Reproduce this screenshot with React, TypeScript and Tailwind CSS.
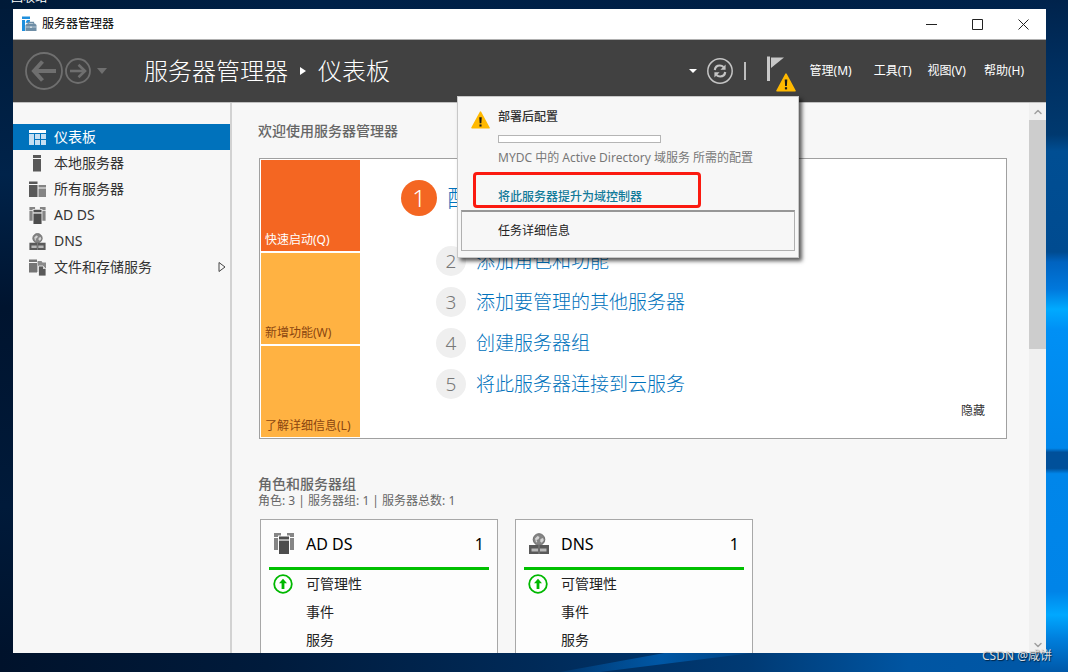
import { ReactNode } from "react";
import { ChevronDown, ChevronUp } from "lucide-react";

interface IconProps {
  className?: string;
}

function Wallpaper() {
  return (
    <svg
      className="absolute inset-0 h-full w-full"
      viewBox="0 0 1068 672"
      preserveAspectRatio="none"
      aria-hidden="true"
    >
      <defs>
        <linearGradient id="base" x1="0" x2="1" y1="0" y2="0">
          <stop offset="0" stopColor="#001a38" />
          <stop offset="0.3" stopColor="#002148" />
          <stop offset="0.7" stopColor="#001f45" />
          <stop offset="1" stopColor="#00234c" />
        </linearGradient>
        <linearGradient id="left" x1="0" x2="0" y1="0" y2="1">
          <stop offset="0" stopColor="#001b3a" />
          <stop offset="0.25" stopColor="#00234a" />
          <stop offset="0.45" stopColor="#00142f" />
          <stop offset="0.75" stopColor="#001a3a" />
          <stop offset="1" stopColor="#00122b" />
        </linearGradient>
        <linearGradient id="right" x1="0" x2="0" y1="0" y2="1">
          <stop offset="0" stopColor="#00234c" />
          <stop offset="0.1" stopColor="#002f60" />
          <stop offset="0.2" stopColor="#00396f" />
          <stop offset="0.225" stopColor="#004e93" />
          <stop offset="0.375" stopColor="#004b90" />
          <stop offset="0.39" stopColor="#0063c0" />
          <stop offset="0.43" stopColor="#0078dc" />
          <stop offset="0.46" stopColor="#00aaff" />
          <stop offset="0.49" stopColor="#0090f5" />
          <stop offset="0.667" stopColor="#0086ea" />
          <stop offset="0.673" stopColor="#00509a" />
          <stop offset="0.697" stopColor="#00509a" />
          <stop offset="0.705" stopColor="#0086ea" />
          <stop offset="0.88" stopColor="#0084e8" />
          <stop offset="0.915" stopColor="#00a8ff" />
          <stop offset="0.95" stopColor="#007fdd" />
          <stop offset="1" stopColor="#0058a8" />
        </linearGradient>
        <linearGradient id="bottom" x1="0" x2="1" y1="0" y2="0">
          <stop offset="0" stopColor="#00122b" />
          <stop offset="0.25" stopColor="#001b3c" />
          <stop offset="0.5" stopColor="#002a58" />
          <stop offset="0.7" stopColor="#003a74" />
          <stop offset="0.85" stopColor="#0055a2" />
          <stop offset="1" stopColor="#0058a8" />
        </linearGradient>
        <linearGradient id="beam" x1="0" x2="1" y1="0" y2="0">
          <stop offset="0" stopColor="#0060b4" stopOpacity="0.2" />
          <stop offset="0.5" stopColor="#0060b4" stopOpacity="0.8" />
          <stop offset="1" stopColor="#0060b4" stopOpacity="0.2" />
        </linearGradient>
      </defs>
      <rect width="1068" height="672" fill="url(#base)" />
      <rect y="9" width="14" height="663" fill="url(#left)" />
      <rect y="650" width="1068" height="22" fill="url(#bottom)" />
      <path d="M560 672 L670 652 L760 652 L600 672 Z" fill="url(#beam)" />
      <rect x="1040" width="28" height="672" fill="url(#right)" />
    </svg>
  );
}

function AppIcon({ className }: IconProps) {
  return (
    <svg className={className} viewBox="0 0 16 16" aria-hidden="true">
      <path d="M1 0.500h8V3H1zM1 4h3v11H1z" fill="#1f8fdd" />
      <path d="M4.500 6.500 6 4h3v1.500L6.500 7z" fill="#1f8fdd" />
      <path d="M4.500 9 6 7.500h8L15.500 9v6h-11z" fill="#6f8ea6" />
      <path d="M7.500 7.800V6.300h5v1.500" fill="none" stroke="#6f8ea6" strokeWidth="1.200" />
      <path d="M4.500 11h11" stroke="#c9d6df" strokeWidth="0.800" />
      <path d="M9.200 10.400h1.600V12H9.200z" fill="#dfe7ec" />
    </svg>
  );
}

function DashboardIcon({ className }: IconProps) {
  return (
    <svg className={className} viewBox="0 0 17 17" aria-hidden="true">
      <path d="M0 1h17v3H0z" fill="#fff" />
      <path d="M0 5h5v11H0zM6 5h5v5H6zM12 5h5v5h-5zM6 11h5v5H6zM12 11h5v5h-5z" fill="#c5def2" />
    </svg>
  );
}

function ServerIcon({ className }: IconProps) {
  return (
    <svg className={className} viewBox="0 0 17 17" aria-hidden="true">
      <path d="M4 0h8v3H4zM4 4h8v12.500H4z" fill="#595959" />
    </svg>
  );
}

function ServersIcon({ className }: IconProps) {
  return (
    <svg className={className} viewBox="0 0 17 17" aria-hidden="true">
      <path d="M0 0.500h8.500V3H0zM0 4h8.500v12H0z" fill="#595959" />
      <path d="M9.500 4H17v2.500H9.500zM9.500 7.500H17V16H9.500z" fill="#858585" />
    </svg>
  );
}

function AdDsIcon({ className }: IconProps) {
  return (
    <svg className={className} viewBox="0 0 20 21" aria-hidden="true">
      <path d="M0 0h7v2.500H4V4H0zM13 0h7v4h-4V2.500h-3zM0 5h4v12H0zM16 5h4v12h-4z" fill="#858585" />
      <path d="M5 3.500h10v3H5zM5 8h10v13H5z" fill="#4d4d4d" />
      <path d="M5 6.500h10V8H5z" fill="#b5b5b5" />
    </svg>
  );
}

function DnsIcon({ className }: IconProps) {
  return (
    <svg className={className} viewBox="0 0 20 21" aria-hidden="true">
      <circle cx="10" cy="6.500" r="5.800" fill="#858585" stroke="#6b6b6b" />
      <path d="M6 5.500 8.500 3l2 1-1 2.200-2 .8.800 2-1.300.4zM11.500 6l2.500-1 .8 2.300-2 2.400-1.600-1.300z" fill="#d4d4d4" />
      <path d="M0 12h20v9H0z" fill="#595959" />
      <path d="M2.500 15.500H9v3H2.500zM11 15.500h6.500v3H11z" fill="#b8b8b8" />
      <path d="M9.600 12h.8v9h-.8z" fill="#8a8a8a" />
    </svg>
  );
}

function StorageIcon({ className }: IconProps) {
  return (
    <svg className={className} viewBox="0 0 17 17" aria-hidden="true">
      <path d="M0 0.500h8V3H0zM0 4h8v9.500H0z" fill="#757575" />
      <path d="M8.500 2h4l1 1.500H17V13H8.500z" fill="#8a8a8a" />
      <path d="M9.500 7h4.500l3 3v7H9.500z" fill="#595959" stroke="#f7f7f7" strokeWidth="0.800" />
      <path d="M14 7v3h3z" fill="#d0d0d0" />
    </svg>
  );
}

function WarningIcon({ className }: IconProps) {
  return (
    <svg className={className} viewBox="0 0 20 19" aria-hidden="true">
      <path
        d="M10 1.200 19 17.800H1z"
        fill="#ffb900"
        stroke="#ffb900"
        strokeWidth="1.600"
        strokeLinejoin="round"
      />
      <path d="M8.700 6.500h2.600l-.4 6.500H9.100z" fill="#1a1a1a" />
      <path d="M8.900 14.200h2.200v2.200H8.900z" fill="#1a1a1a" />
    </svg>
  );
}

function StatusUpIcon({ className }: IconProps) {
  return (
    <svg className={className} viewBox="0 0 20 20" aria-hidden="true">
      <circle cx="10" cy="10" r="8.800" fill="#fff" stroke="#00b800" strokeWidth="1.800" />
      <path d="M10 4.800 14 9.300h-2.600V15H8.600V9.300H6z" fill="#00b800" />
    </svg>
  );
}

function BackIcon() {
  return (
    <svg className="h-[38px] w-[38px]" viewBox="0 0 38 38" fill="none" stroke="#6f6f6f" aria-hidden="true">
      <circle cx="19" cy="19" r="18" strokeWidth="1.800" />
      <path d="M31 19H9.500" strokeWidth="4" />
      <path d="M17.500 9.500 9 19l8.500 9.500" strokeWidth="4" />
    </svg>
  );
}

function ForwardIcon() {
  return (
    <svg className="h-[26px] w-[26px]" viewBox="0 0 26 26" fill="none" stroke="#6f6f6f" aria-hidden="true">
      <circle cx="13" cy="13" r="12" strokeWidth="1.800" />
      <path d="M5 13h14.500" strokeWidth="2.600" />
      <path d="M13.500 6.800 20 13l-6.500 6.200" strokeWidth="2.600" />
    </svg>
  );
}

function RefreshIcon() {
  return (
    <svg className="h-[26px] w-[26px]" viewBox="0 0 26 26" fill="none" stroke="#c4c4c4" aria-hidden="true">
      <circle cx="13" cy="13" r="12.200" strokeWidth="1.500" />
      <path d="M7.800 12c.4-3 2.400-4.500 5-4.500 1.600 0 2.700.5 3.700 1.500" strokeWidth="2.200" />
      <path d="M18.200 14c-.4 3-2.400 4.500-5 4.500-1.600 0-2.700-.5-3.700-1.500" strokeWidth="2.200" />
      <path d="M18.600 6.500v5.200h-5.200zM7.400 19.500v-5.200h5.200z" fill="#c4c4c4" stroke="none" />
    </svg>
  );
}

function FlagIcon() {
  return (
    <svg className="h-[36px] w-[30px]" viewBox="0 0 30 36" aria-hidden="true">
      <path d="M1 0.500h3V25H1z" fill="#c8c8c8" />
      <path d="M5 1.500h13L5 12z" fill="#c8c8c8" />
    </svg>
  );
}

interface SidebarItem {
  label: string;
  icon: ReactNode;
  active?: boolean;
  expandable?: boolean;
}

const sidebarItems: SidebarItem[] = [
  { label: "仪表板", icon: <DashboardIcon className="h-[17px] w-[17px]" />, active: true },
  { label: "本地服务器", icon: <ServerIcon className="h-[17px] w-[17px]" /> },
  { label: "所有服务器", icon: <ServersIcon className="h-[17px] w-[17px]" /> },
  { label: "AD DS", icon: <AdDsIcon className="h-[17px] w-[17px]" /> },
  { label: "DNS", icon: <DnsIcon className="h-[17px] w-[17px]" /> },
  { label: "文件和存储服务", icon: <StorageIcon className="h-[17px] w-[17px]" />, expandable: true },
];

const tiles = [
  { label: "快速启动(Q)", className: "bg-[#f46622] text-white" },
  { label: "新增功能(W)", className: "bg-[#ffb242] text-[#8a4510]" },
  { label: "了解详细信息(L)", className: "bg-[#ffb242] text-[#8a4510]" },
];

const steps = ["添加角色和功能", "添加要管理的其他服务器", "创建服务器组", "将此服务器连接到云服务"];

function TitleBar() {
  return (
    <div className="flex h-[31px] shrink-0 items-center border-b border-[#b0b0b0] bg-white">
      <AppIcon className="ml-2 h-4 w-4" />
      <h1 className="ml-[5px] flex-1 text-xs text-black">服务器管理器</h1>
      <button aria-label="最小化" className="flex h-7 w-[46px] items-center justify-center">
        <svg className="h-[11px] w-[11px]" viewBox="0 0 11 11" stroke="#222" fill="none">
          <path d="M0 5.500h11" />
        </svg>
      </button>
      <button aria-label="最大化" className="flex h-7 w-[46px] items-center justify-center">
        <svg className="h-[11px] w-[11px]" viewBox="0 0 11 11" stroke="#222" fill="none">
          <path d="M.5.5h10v10H.5z" />
        </svg>
      </button>
      <button aria-label="关闭" className="flex h-7 w-[46px] items-center justify-center">
        <svg className="h-[11px] w-[11px]" viewBox="0 0 11 11" stroke="#222" fill="none">
          <path d="m.5.5 10 10M10.500.5l-10 10" />
        </svg>
      </button>
    </div>
  );
}

function NotificationPanel() {
  return (
    <div className="absolute top-14 right-[247px] z-10 w-[342px] border border-[#c8c8c8] bg-[#f7f7f7] p-[3px] pb-[6px] shadow-[3px_3px_4px_rgba(0,0,0,0.65)]">
      <div className="flex px-[10px] pt-[7px]">
        <WarningIcon className="mt-1 h-[18px] w-[19px]" />
        <div className="ml-2 flex flex-col items-start text-xs">
          <label htmlFor="deploy" className="leading-5 font-medium text-[#333]">
            部署后配置
          </label>
          <progress
            id="deploy"
            value={0}
            max={100}
            className="mt-2 h-2 w-[163px] appearance-none border border-[#b5b5b5] bg-white [&::-webkit-progress-bar]:bg-white"
          />
          <p className="mt-[5px] leading-5 whitespace-nowrap text-[#777]">
            MYDC 中的 Active Directory 域服务 所需的配置
          </p>
        </div>
      </div>
      <div className="mt-1 ml-3 flex h-9 w-[228px] items-end rounded-[4px] border-3 border-[#fb1a10] pl-[22px]">
        <a href="#promote" className="text-xs leading-4 font-medium text-[#127a99]">
          将此服务器提升为域控制器
        </a>
      </div>
      <button className="mt-[2px] flex h-[41px] w-full items-center border border-t-2 border-[#b0b0b0] border-t-[#979797] pl-9 text-xs text-[#222]">
        任务详细信息
      </button>
    </div>
  );
}

function Header() {
  return (
    <header className="relative flex h-[62px] shrink-0 items-center bg-[#414141] text-white">
      <button aria-label="后退" className="ml-3">
        <BackIcon />
      </button>
      <button aria-label="前进" className="ml-[2px]">
        <ForwardIcon />
      </button>
      <button aria-label="历史记录" className="ml-[6px]">
        <svg className="h-[6px] w-[10px]" viewBox="0 0 10 6">
          <path d="M0 0h10L5 6z" fill="#6f6f6f" />
        </svg>
      </button>
      <nav aria-label="路径" className="ml-[37px] flex items-center text-2xl font-light">
        <span>服务器管理器</span>
        <svg className="mx-3 h-2 w-[6px]" viewBox="0 0 6 8" aria-hidden="true">
          <path d="M0 0v8l6-4z" fill="#fff" />
        </svg>
        <span>仪表板</span>
      </nav>
      <button aria-label="刷新选项" className="ml-auto">
        <svg className="h-1 w-2" viewBox="0 0 8 4">
          <path d="M0 0h8L4 4z" fill="#fff" />
        </svg>
      </button>
      <button aria-label="刷新" className="ml-[10px]">
        <RefreshIcon />
      </button>
      <div className="ml-[11px] h-[18px] w-[2px] bg-[#bdbdbd]" />
      <button aria-label="通知" className="relative mt-[6px] ml-5">
        <FlagIcon />
        <WarningIcon className="absolute right-0 bottom-0 h-[19px] w-5" />
      </button>
      <nav aria-label="菜单" className="mr-[22px] ml-[14px] flex text-xs">
        <button>管理(M)</button>
        <button className="ml-[22px]">工具(T)</button>
        <button className="ml-4">视图(V)</button>
        <button className="ml-[18px]">帮助(H)</button>
      </nav>
      <NotificationPanel />
    </header>
  );
}

function Sidebar() {
  return (
    <nav aria-label="服务器" className="w-[219px] shrink-0 border-r-2 border-[#d2d2d2] pt-[21px]">
      {sidebarItems.map((item) => (
        <button
          key={item.label}
          className={`flex h-[26px] w-full items-center pl-4 text-sm ${
            item.active ? "bg-[#0072bc] text-white" : "text-[#333]"
          }`}
        >
          {item.icon}
          <span className="ml-2">{item.label}</span>
          {item.expandable && (
            <svg className="mr-1 ml-auto h-[12px] w-[8px]" viewBox="0 0 8 12" aria-hidden="true">
              <path d="M1 1.500v9L7 6z" fill="none" stroke="#444" />
            </svg>
          )}
        </button>
      ))}
    </nav>
  );
}

function WelcomeTile() {
  return (
    <section className="mt-[17px] flex border border-[#a0a0a0] bg-white p-px">
      <div className="flex w-[99px] shrink-0 flex-col gap-[2px]">
        {tiles.map((tile) => (
          <button
            key={tile.label}
            className={`flex h-[91px] items-end px-1 pb-px text-xs leading-5 whitespace-nowrap ${tile.className}`}
          >
            {tile.label}
          </button>
        ))}
      </div>
      <div className="flex flex-1 flex-col pt-5 pl-[41px]">
        <div className="flex items-center">
          <span className="flex h-9 w-9 items-center justify-center rounded-full bg-[#f46622] text-2xl font-light text-white">
            1
          </span>
          <a href="#configure" className="ml-[10px] text-2xl font-light text-[#0072bc]">
            配置此本地服务器
          </a>
        </div>
        <ol className="mt-[30px] ml-[35px] flex flex-col gap-[11px]">
          {steps.map((step, i) => (
            <li key={step} className="flex h-[30px] items-center">
              <span className="flex h-[30px] w-[30px] items-center justify-center rounded-full bg-[#efefef] text-[19px] font-light text-[#777]">
                {i + 2}
              </span>
              <a href="#step" className="ml-[10px] text-[19px] font-light text-[#0072bc]">
                {step}
              </a>
            </li>
          ))}
        </ol>
        <button className="mt-auto mr-5 mb-4 self-end text-xs leading-5 text-[#333]">隐藏</button>
      </div>
    </section>
  );
}

interface RoleCardProps {
  title: string;
  count: number;
  icon: ReactNode;
}

function RoleCard({ title, count, icon }: RoleCardProps) {
  return (
    <article className="h-[240px] w-[238px] border border-[#a8a8a8] bg-[#fdfdfd] px-2">
      <div className="flex h-[50px] items-center border-b-3 border-[#00c000] px-[5px] text-base text-black">
        {icon}
        <h3 className="ml-3 flex-1">{title}</h3>
        <span>{count}</span>
      </div>
      <ul className="text-sm text-[#222]">
        <li className="flex h-7 items-center pl-1">
          <StatusUpIcon className="h-5 w-5" />
          <button className="ml-[13px]">可管理性</button>
        </li>
        <li className="flex h-7 items-center pl-[37px]">
          <button>事件</button>
        </li>
        <li className="flex h-7 items-center pl-[37px]">
          <button>服务</button>
        </li>
      </ul>
    </article>
  );
}

function ScrollBar() {
  return (
    <div className="flex w-[17px] shrink-0 flex-col items-center bg-[#f0f0f0] text-[#a0a0a0]">
      <button aria-label="向上滚动" className="flex h-[17px] items-center">
        <ChevronUp className="h-3 w-3" strokeWidth={3} />
      </button>
      <div className="h-5/12 w-full bg-[#cdcdcd]" />
      <button aria-label="向下滚动" className="mt-auto flex h-[17px] items-center">
        <ChevronDown className="h-3 w-3" strokeWidth={3} />
      </button>
    </div>
  );
}

export default function App() {
  return (
    <div className="relative flex h-screen flex-col overflow-hidden bg-[#001a38] pt-[9px] pr-[22px] pb-[19px] pl-[13px] font-['Noto_Sans','Noto_Sans_CJK_SC',sans-serif]">
      <Wallpaper />
      <span className="absolute -top-3 left-[11px] text-xs leading-5 text-white">回收站</span>

      <div className="relative flex min-h-0 flex-1 flex-col bg-[#f7f7f7]">
        <TitleBar />
        <Header />
        <div className="flex min-h-0 flex-1 border-t border-[#c0c0c0]">
          <Sidebar />
          <main className="min-w-0 flex-1 overflow-hidden pt-[18px] pr-[22px] pl-[27px]">
            <h2 className="-ml-px text-sm font-medium text-[#666]">欢迎使用服务器管理器</h2>
            <WelcomeTile />
            <h2 className="mt-9 -ml-px text-sm leading-[18px] font-medium text-[#666]">角色和服务器组</h2>
            <p className="-ml-px text-xs text-[#666]">角色: 3 | 服务器组: 1 | 服务器总数: 1</p>
            <div className="mt-[10px] ml-px flex gap-[17px]">
              <RoleCard title="AD DS" count={1} icon={<AdDsIcon className="h-[21px] w-5" />} />
              <RoleCard title="DNS" count={1} icon={<DnsIcon className="h-[21px] w-5" />} />
            </div>
          </main>
          <ScrollBar />
        </div>
      </div>

      <span className="absolute right-4 bottom-[6px] text-xs leading-5 text-[#dcdcdc] [text-shadow:1px_1px_1px_rgba(0,0,0,0.6)]">
        CSDN @咸饼
      </span>
    </div>
  );
}
